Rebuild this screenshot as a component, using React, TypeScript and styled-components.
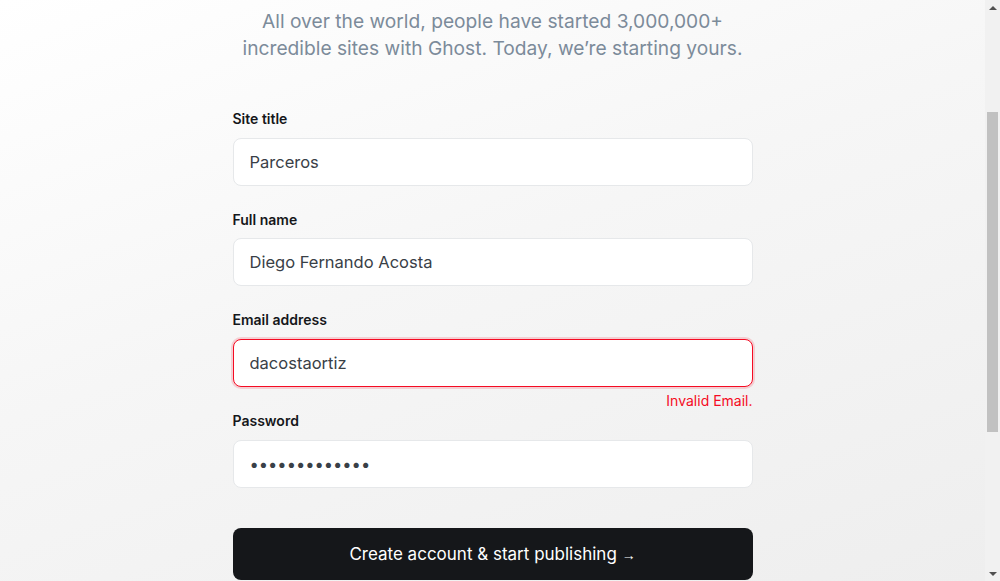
import { useLayoutEffect, useRef } from 'react'
import styled, { createGlobalStyle } from 'styled-components'

const PAGE_HEIGHT = 1000
const SCROLL_TOP = 176
const ARROW_SIZE = 15

const GlobalStyle = createGlobalStyle`
  body {
    margin: 0;
    font-family: Inter, 'Noto Sans', sans-serif;
    color: #15171a;
    overflow: hidden;
  }

  * {
    box-sizing: border-box;
  }
`

const Window = styled.div`
  display: flex;
  height: 100vh;
`

const ScrollArea = styled.div`
  flex: 1;
  overflow-y: scroll;
  scrollbar-width: none;
  background: linear-gradient(160deg, #ffffff 0%, #f6f6f6 45%, #eeeeee 100%);

  &::-webkit-scrollbar {
    display: none;
  }
`

const Scrollbar = styled.div`
  width: 15px;
  display: flex;
  flex-direction: column;
  background: #f1f1f1;
`

const ArrowButton = styled.div<{ $dir: 'up' | 'down' }>`
  height: ${ARROW_SIZE}px;
  display: flex;
  justify-content: center;
  align-items: center;

  &::before {
    content: '';
    width: 0;
    height: 0;
    border-left: 4px solid transparent;
    border-right: 4px solid transparent;
    ${(p) =>
      p.$dir === 'up' ? 'border-bottom: 4px solid #505050;' : 'border-top: 4px solid #505050;'}
  }
`

const Track = styled.div`
  flex: 1;
  padding: 0 2px;
`

const Thumb = styled.div`
  background: #c1c1c1;
`

const Page = styled.main`
  min-height: ${PAGE_HEIGHT}px;
  padding-top: 184px;
  padding-bottom: 80px;
  display: flex;
  flex-direction: column;
  align-items: center;
`

const Intro = styled.p`
  margin: 0;
  width: 510px;
  text-align: center;
  font-size: 19.2px;
  line-height: 27px;
  color: #7c8b9a;
`

const Form = styled.form`
  width: 520px;
  margin-top: 47px;
  display: flex;
  flex-direction: column;
`

const FieldGroup = styled.div<{ $hasError?: boolean }>`
  display: flex;
  flex-direction: column;
  padding-bottom: ${(p) => (p.$hasError ? '0px' : '24px')};
`

const Label = styled.label`
  font-size: 14px;
  line-height: 20.5px;
  font-weight: 600;
  color: #15171a;
  margin-bottom: 8px;
`

const Input = styled.input<{ $hasError?: boolean }>`
  width: 100%;
  height: 48px;
  padding: 0 16px;
  border-radius: 8px;
  border: 1px solid ${(p) => (p.$hasError ? '#f50b23' : '#e6e8ea')};
  box-shadow: ${(p) => (p.$hasError ? '0 0 0 2px rgba(245, 11, 35, 0.16)' : 'none')};
  background: #ffffff;
  font-family: Inter, 'Noto Sans', sans-serif;
  font-size: 16.5px;
  color: #394047;
  outline: none;
`

const ErrorText = styled.div`
  padding-top: 5px;
  height: 24.5px;
  text-align: right;
  font-size: 14px;
  line-height: 17px;
  color: #f50b23;
`

const SubmitButton = styled.button`
  margin-top: 16.5px;
  height: 52px;
  width: 100%;
  border: none;
  border-radius: 8px;
  background: #15171a;
  color: #ffffff;
  font-family: Inter, 'Noto Sans', sans-serif;
  font-size: 17px;
  cursor: pointer;
`

const Arrow = styled.span`
  font-family: 'Liberation Sans', sans-serif;
  font-size: 14px;
`

type FieldProps = {
  label: string
  value: string
  type?: string
  error?: string
}

const Field = ({ label, value, type = 'text', error }: FieldProps) => (
  <FieldGroup $hasError={!!error}>
    <Label>{label}</Label>
    <Input type={type} defaultValue={value} readOnly $hasError={!!error} />
    {error && <ErrorText>{error}</ErrorText>}
  </FieldGroup>
)

const App = () => {
  const scrollRef = useRef<HTMLDivElement>(null)

  useLayoutEffect(() => {
    if (scrollRef.current) scrollRef.current.scrollTop = SCROLL_TOP
  }, [])

  const viewHeight = typeof window !== 'undefined' ? window.innerHeight : 581
  const trackHeight = viewHeight - ARROW_SIZE * 2
  const thumbTop = Math.round((trackHeight * SCROLL_TOP) / PAGE_HEIGHT)
  const thumbHeight = Math.round((trackHeight * viewHeight) / PAGE_HEIGHT)

  return (
    <>
      <GlobalStyle />
      <Window>
        <ScrollArea ref={scrollRef}>
          <Page>
            <Intro>
              All over the world, people have started 3,000,000+ incredible sites with Ghost.
              Today, we’re starting yours.
            </Intro>
            <Form onSubmit={(e) => e.preventDefault()}>
              <Field label='Site title' value='Parceros' />
              <Field label='Full name' value='Diego Fernando Acosta' />
              <Field label='Email address' value='dacostaortiz' error='Invalid Email.' />
              <Field label='Password' value='dacosta123456' type='password' />
              <SubmitButton type='submit'>
                Create account &amp; start publishing <Arrow>→</Arrow>
              </SubmitButton>
            </Form>
          </Page>
        </ScrollArea>
        <Scrollbar>
          <ArrowButton $dir='up' />
          <Track>
            <Thumb style={{ marginTop: thumbTop, height: thumbHeight }} />
          </Track>
          <ArrowButton $dir='down' />
        </Scrollbar>
      </Window>
    </>
  )
}

export default App
